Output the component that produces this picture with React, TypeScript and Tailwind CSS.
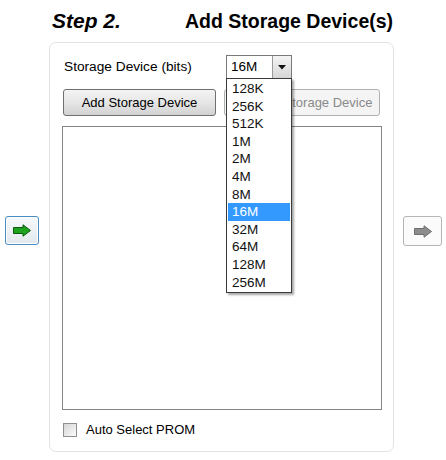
import React from "react";

const sizes = ["128K", "256K", "512K", "1M", "2M", "4M", "8M", "16M", "32M", "64M", "128M", "256M"];

function Arrow({ fill, stroke }: { fill: string; stroke: string }) {
  return (
    <svg width="20" height="13" viewBox="0 0 20 13">
      <path d="M1.5 3.5 H11 V0.8 L18.5 6.5 L11 12.2 V9.5 H1.5 Z" fill={fill} stroke={stroke} strokeWidth="1" strokeLinejoin="round" />
    </svg>
  );
}

const App: React.FC = () => {
  const selected = "16M";
  return (
    <div className="w-[446px] h-[460px] bg-white text-black overflow-hidden font-['Liberation_Sans',Arial,sans-serif]">
      <div className="flex items-baseline h-[42px] pt-[8px]">
        <span className="ml-[52px] w-[133px] text-[21px] font-bold italic leading-[26px]">Step 2.</span>
        <span className="text-[19.5px] font-bold leading-[26px]">Add Storage Device(s)</span>
      </div>

      <div className="flex">
        <div className="w-[49px] pt-[174px] pl-[5px]">
          <button className="w-[34px] h-[29px] flex items-center justify-center rounded-[3px] border border-[#4a8cc4] bg-gradient-to-b from-[#f7fafc] to-[#e2e8ed] shadow-[inset_0_0_0_1px_#ffffff]">
            <Arrow fill="#1fa31f" stroke="#0b5a0b" />
          </button>
        </div>

        <div className="relative w-[345px] h-[410px] rounded-[7px] border border-[#e3e3e3] pl-[13px] pt-[12px]">
          <div className="flex items-center h-[24px]">
            <span className="w-[163px] pl-[1px] text-[13.7px]">Storage Device (bits)</span>
            <div className="relative">
              <div className="flex w-[66px] h-[24px] border border-[#7a7a7a] bg-white">
                <span className="flex-1 pl-[4px] text-[13.5px] leading-[22px]">{selected}</span>
                <span className="w-[19px] h-full border-l border-[#9a9a9a] bg-gradient-to-b from-[#f4f4f4] to-[#d6d6d6] flex items-center justify-center">
                  <svg width="8" height="5" viewBox="0 0 8 5">
                    <path d="M0 0 H8 L4 4.5 Z" fill="#111" />
                  </svg>
                </span>
              </div>
              <div className="absolute left-0 top-[23px] z-10 w-[66px] bg-white border border-[#3c3c3c] py-[1px] shadow-[2px_2px_2px_rgba(0,0,0,0.35)]">
                {sizes.map((s) => (
                  <div
                    key={s}
                    className={
                      s === selected
                        ? "h-[17.6px] mx-[1px] pl-[4px] text-[13.5px] leading-[17.6px] bg-[#3399ff] text-white"
                        : "h-[17.6px] mx-[1px] pl-[4px] text-[13.5px] leading-[17.6px] text-[#111]"
                    }
                  >
                    {s}
                  </div>
                ))}
              </div>
            </div>
          </div>

          <div className="flex gap-[8px] mt-[10px]">
            <button className="w-[153px] h-[27px] rounded-[3px] border border-[#707070] bg-gradient-to-b from-[#f4f4f4] via-[#e6e6e6] to-[#d2d2d2] text-[13px] text-black">
              Add Storage Device
            </button>
            <button className="w-[156px] h-[27px] rounded-[3px] border border-[#adb2b5] bg-[#f4f4f4] text-[13px] text-[#8a8a8a] whitespace-nowrap">
              Remove Storage Device
            </button>
          </div>

          <div className="w-[320px] h-[284px] mt-[10px] -ml-[1px] border border-[#848484] bg-white"></div>

          <label className="flex items-center mt-[12px] h-[16px]">
            <span className="w-[14px] h-[14px] border border-[#8f8f8f] bg-gradient-to-br from-[#d6d6d6] to-[#fbfbfb]"></span>
            <span className="ml-[9px] text-[13px]">Auto Select PROM</span>
          </label>
        </div>

        <div className="pt-[174px] pl-[9px]">
          <button className="w-[39px] h-[30px] flex items-center justify-center rounded-[3px] border border-[#b5b5b5] bg-[#fbfbfb]">
            <Arrow fill="#8c8c8c" stroke="#6e6e6e" />
          </button>
        </div>
      </div>
    </div>
  );
};

export default App;
